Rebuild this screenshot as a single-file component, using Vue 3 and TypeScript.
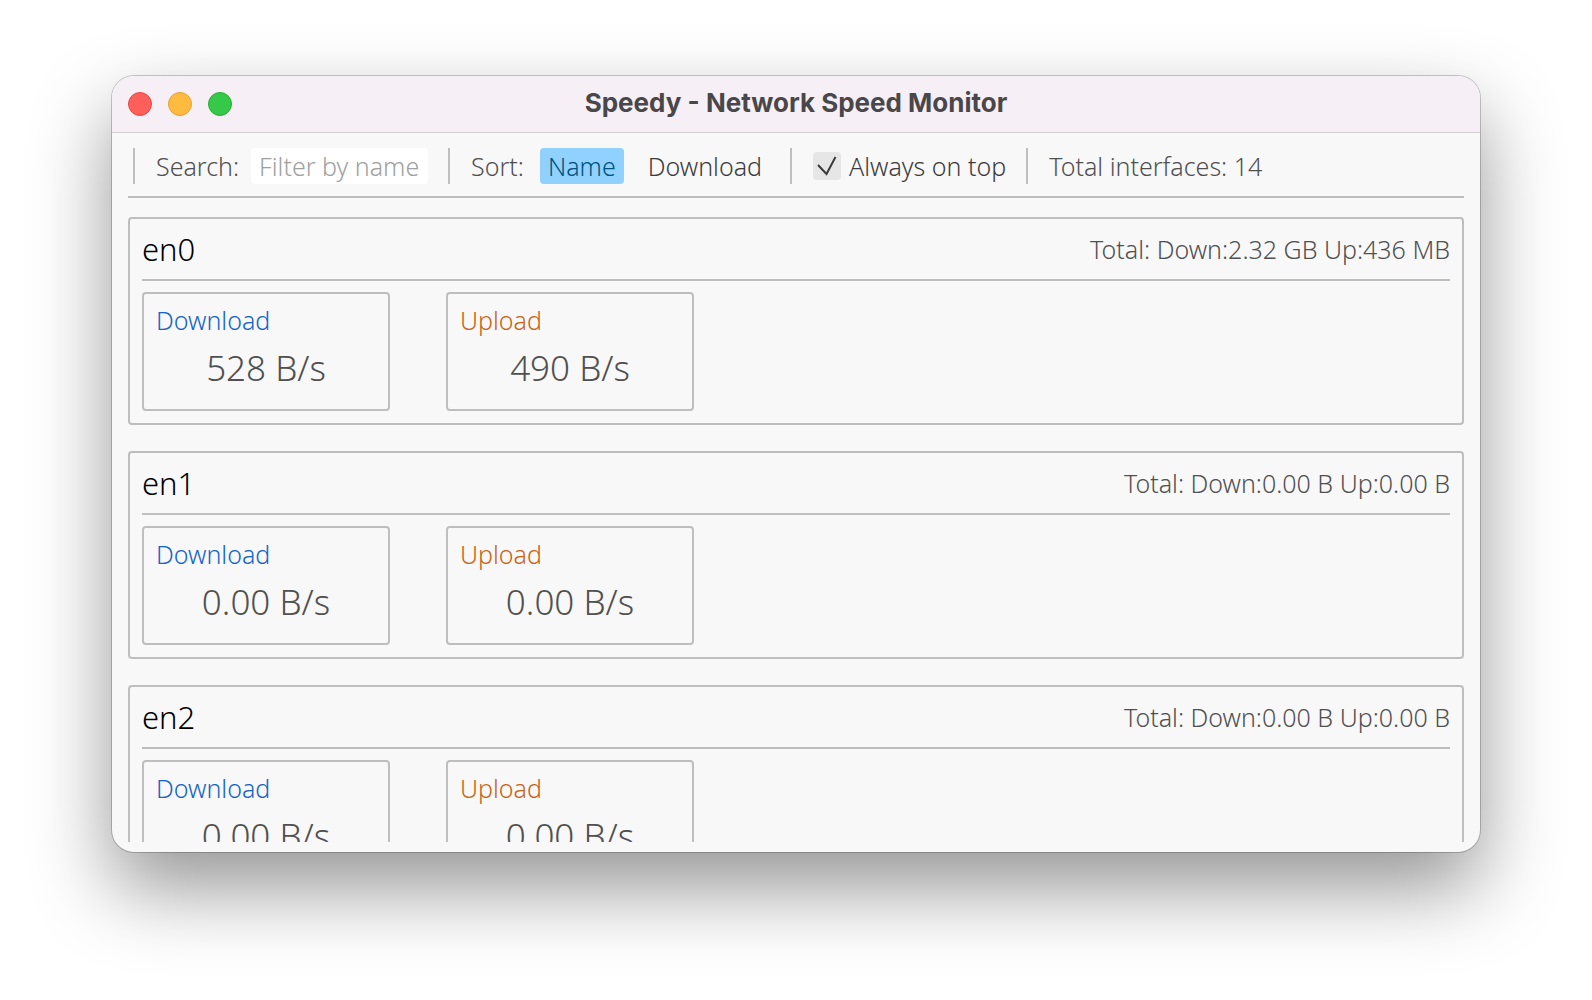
<script setup lang="ts">
import { computed, ref } from 'vue'

interface NetworkInterface {
  name: string
  totalDown: string
  totalUp: string
  download: string
  upload: string
}

const interfaces: NetworkInterface[] = [
  { name: 'en0', totalDown: '2.32 GB', totalUp: '436 MB', download: '528 B/s', upload: '490 B/s' },
  { name: 'en1', totalDown: '0.00 B', totalUp: '0.00 B', download: '0.00 B/s', upload: '0.00 B/s' },
  { name: 'en2', totalDown: '0.00 B', totalUp: '0.00 B', download: '0.00 B/s', upload: '0.00 B/s' },
]

const total = 14
const filter = ref('')
const sortBy = ref<'Name' | 'Download'>('Name')
const onTop = ref(true)

const visible = computed(() => interfaces.filter((i) => i.name.includes(filter.value)))
</script>

<template>
  <div class="desktop">
    <main class="window">
      <header class="titlebar">
        <div class="lights">
          <button class="light close" type="button" aria-label="Close"></button>
          <button class="light minimize" type="button" aria-label="Minimize"></button>
          <button class="light zoom" type="button" aria-label="Zoom"></button>
        </div>
        <h1 class="title">Speedy - Network Speed Monitor</h1>
      </header>

      <div class="toolbar">
        <div class="group search">
          <label for="filter">Search:</label>
          <input id="filter" v-model="filter" class="field" type="text" placeholder="Filter by name" />
        </div>
        <div class="group sort">
          <span>Sort:</span>
          <button class="option" :class="{ active: sortBy === 'Name' }" type="button" @click="sortBy = 'Name'">Name</button>
          <button class="option" :class="{ active: sortBy === 'Download' }" type="button" @click="sortBy = 'Download'">Download</button>
        </div>
        <div class="group pin">
          <label class="check">
            <span class="box">
              <input v-model="onTop" type="checkbox" />
              <svg v-if="onTop" viewBox="0 0 28 28" aria-hidden="true">
                <path d="M5 13 L13.500 22 L22.500 5" fill="none" stroke="#3c3c3c" stroke-width="2" />
              </svg>
            </span>
            Always on top
          </label>
        </div>
        <div class="group">
          <span>Total interfaces: {{ total }}</span>
        </div>
      </div>

      <div class="list">
        <section v-for="item in visible" :key="item.name" class="card">
          <div class="card-head">
            <h2 class="name">{{ item.name }}</h2>
            <span>Total: Down:{{ item.totalDown }} Up:{{ item.totalUp }}</span>
          </div>
          <div class="meters">
            <div class="meter">
              <span class="down">Download</span>
              <span class="speed">{{ item.download }}</span>
            </div>
            <div class="meter">
              <span class="up">Upload</span>
              <span class="speed">{{ item.upload }}</span>
            </div>
          </div>
        </section>
      </div>
    </main>
  </div>
</template>

<style>
body {
  margin: 0;
  background: #fff;
}
</style>

<style scoped>
* {
  box-sizing: border-box;
}

.desktop {
  height: 100vh;
  padding: 76px 112px 148px;
  overflow: hidden;
  font-family: 'Noto Sans', 'Open Sans', sans-serif;
  font-size: 25px;
  font-weight: 300;
  line-height: 36px;
  color: #505050;
}

button,
input {
  margin: 0;
  padding: 0;
  border: 0;
  font: inherit;
}

.window {
  display: flex;
  flex-direction: column;
  height: 100%;
  padding-bottom: 10px;
  border-radius: 22px;
  overflow: hidden;
  background: #f8f8f8;
  box-shadow:
    0 0 0 1px rgba(0, 0, 0, 0.2),
    0 36px 80px rgba(0, 0, 0, 0.42);
}

.titlebar {
  display: grid;
  grid-template-columns: 1fr auto 1fr;
  align-items: center;
  flex: none;
  height: 57px;
  padding: 0 16px;
  border-bottom: 1px solid #d2ced1;
  background: #f7eff6;
}

.lights {
  display: flex;
  gap: 16px;
}

.light {
  width: 24px;
  height: 24px;
  border: 1px solid;
  border-radius: 50%;
}

.close {
  background: #fe5f58;
  border-color: #e24a45;
}

.minimize {
  background: #febb3f;
  border-color: #e0a033;
}

.zoom {
  background: #35c849;
  border-color: #2bac36;
}

.title {
  margin: 0;
  padding-bottom: 2px;
  font-family: Inter, sans-serif;
  font-size: 26px;
  font-weight: 700;
  color: #4a474a;
}

.toolbar {
  display: flex;
  flex: none;
  margin: 0 16px;
  padding: 15px 0 12px 5px;
  border-bottom: 2px solid #bebebe;
}

.group {
  display: flex;
  align-items: center;
  padding: 0 20px 0 21px;
  border-left: 2px solid #bebebe;
  line-height: 36px;
  white-space: nowrap;
}

.search {
  gap: 12px;
}

.field {
  width: 177px;
  height: 36px;
  padding: 0 8px;
  border-radius: 4px;
  background: #fff;
  color: #505050;
}

.field::placeholder {
  color: #a0a0a0;
  opacity: 1;
}

.sort {
  gap: 16px;
}

.option {
  height: 36px;
  padding: 0 8px;
  border-radius: 4px;
  background: transparent;
  color: #3c3c3c;
}

.option.active {
  background: #90d1ff;
  color: #00537d;
}

.check {
  display: flex;
  align-items: center;
  gap: 8px;
  color: #3c3c3c;
}

.box {
  display: grid;
  width: 28px;
  height: 28px;
  border-radius: 4px;
  background: #e6e6e6;
}

.box > * {
  grid-area: 1 / 1;
  width: 28px;
  height: 28px;
}

.box input {
  margin: 0;
  appearance: none;
}

.list {
  display: flex;
  flex: 1;
  flex-direction: column;
  gap: 26px;
  min-height: 0;
  padding: 19px 16px 0;
  overflow: hidden;
}

.card {
  flex: none;
  padding: 12px;
  border: 2px solid #bebebe;
  border-radius: 4px;
}

.card-head {
  display: flex;
  align-items: center;
  justify-content: space-between;
  height: 50px;
  padding-bottom: 12px;
  border-bottom: 2px solid #bebebe;
}

.name {
  margin: 0;
  font-size: 31px;
  font-weight: 300;
  color: #000;
}

.meters {
  display: flex;
  gap: 56px;
  padding-top: 11px;
}

.meter {
  display: flex;
  flex-direction: column;
  width: 248px;
  height: 119px;
  padding: 8px 12px;
  border: 2px solid #bebebe;
  border-radius: 4px;
}

.down {
  color: #1464c8;
}

.up {
  color: #c86414;
}

.speed {
  margin-top: 8px;
  font-size: 35px;
  line-height: 44px;
  text-align: center;
}
</style>
